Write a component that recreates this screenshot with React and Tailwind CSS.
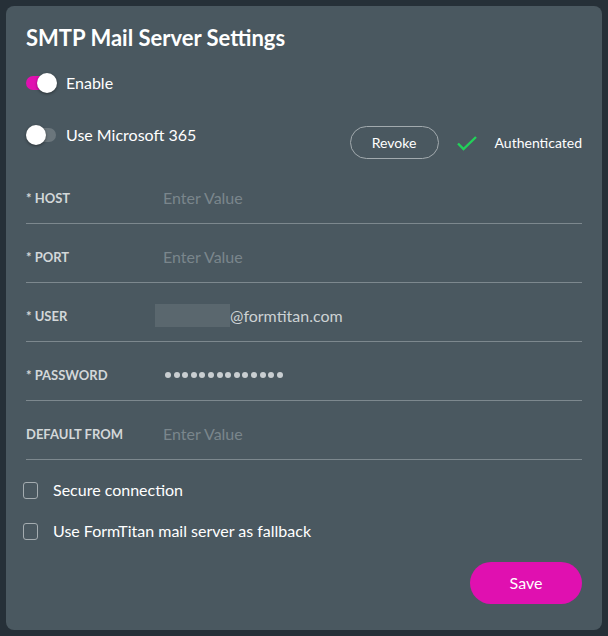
import React from "react";

const Toggle = ({ on }) => (
  <div className="relative h-[20px] w-[31px] shrink-0">
    <div
      className={
        "absolute left-0 top-[3px] h-[14px] w-[30px] rounded-full " +
        (on ? "bg-[#e010b0]" : "bg-[#6b767c]")
      }
    />
    <div
      className={
        "absolute top-0 h-[20px] w-[20px] rounded-full bg-white shadow-[0_1px_3px_rgba(0,0,0,0.45)] " +
        (on ? "left-[11px]" : "left-0")
      }
    />
  </div>
);

const Checkbox = ({ label }) => (
  <div className="flex h-[18px] items-center">
    <div className="ml-[-3px] h-[17px] w-[15px] rounded-[3px] border border-[#a4acb0]" />
    <span className="ml-[15px] text-[16px] leading-[20px] text-white">{label}</span>
  </div>
);

const Row = ({ label, children }) => (
  <div className="flex h-[59px] items-center border-b border-[#7d888e] pt-[7px]">
    <div className="w-[129px] shrink-0 text-[13px] font-bold leading-[16px] text-[#d3d7d9]">{label}</div>
    <div className="flex flex-1 items-center">{children}</div>
  </div>
);

const Placeholder = () => (
  <span className="pl-[8px] text-[16px] leading-[20px] text-[#7a868c]">Enter Value</span>
);

export default function App() {
  return (
    <div
      className="min-h-[636px] w-[608px] bg-[#263038] p-[6px]"
      style={{ fontFamily: "Lato, 'Noto Sans', sans-serif" }}
    >
      <div className="h-[624px] rounded-[8px] bg-[#4a5860] px-[20px] pt-[19px]">
        <h1 className="text-[22px] font-bold leading-[26px] text-white">SMTP Mail Server Settings</h1>

        <div className="mt-[22px] flex items-center gap-[9px]">
          <Toggle on />
          <span className="text-[16px] leading-[20px] text-white">Enable</span>
        </div>

        <div className="mt-[32px] flex items-start justify-between">
          <div className="flex h-[20px] items-center gap-[9px]">
            <Toggle />
            <span className="text-[16px] leading-[20px] text-white">Use Microsoft 365</span>
          </div>
          <div className="mt-[1px] flex items-center">
            <button className="h-[33px] w-[89px] rounded-full border border-[#a2aaae] text-[14px] text-white">
              Revoke
            </button>
            <svg className="ml-[18px]" width="22" height="18" viewBox="0 0 22 18" fill="none">
              <path d="M1 9.5 L6.5 15 L19 3" stroke="#22d159" strokeWidth="2.4" />
            </svg>
            <span className="ml-[16px] text-[14px] leading-[18px] text-white">Authenticated</span>
          </div>
        </div>

        <div className="mt-[6px]">
          <Row label="* HOST">
            <Placeholder />
          </Row>
          <Row label="* PORT">
            <Placeholder />
          </Row>
          <Row label="* USER">
            <div className="h-[23px] w-[75px] bg-[#5a676e]" />
            <span className="text-[16px] leading-[20px] text-[#cdd2d4]">@formtitan.com</span>
          </Row>
          <Row label="* PASSWORD">
            <div className="flex gap-[2.6px] pl-[10px]">
              {Array.from({ length: 14 }).map((_, i) => (
                <span key={i} className="h-[6px] w-[6px] rounded-full bg-[#c9ced1]" />
              ))}
            </div>
          </Row>
          <Row label="DEFAULT FROM">
            <Placeholder />
          </Row>
        </div>

        <div className="mt-[21px]">
          <Checkbox label="Secure connection" />
        </div>
        <div className="mt-[23px]">
          <Checkbox label="Use FormTitan mail server as fallback" />
        </div>

        <div className="mt-[22px] flex justify-end">
          <button className="h-[42px] w-[112px] rounded-full bg-[#e010b0] text-[16px] text-white">
            Save
          </button>
        </div>
      </div>
    </div>
  );
}
